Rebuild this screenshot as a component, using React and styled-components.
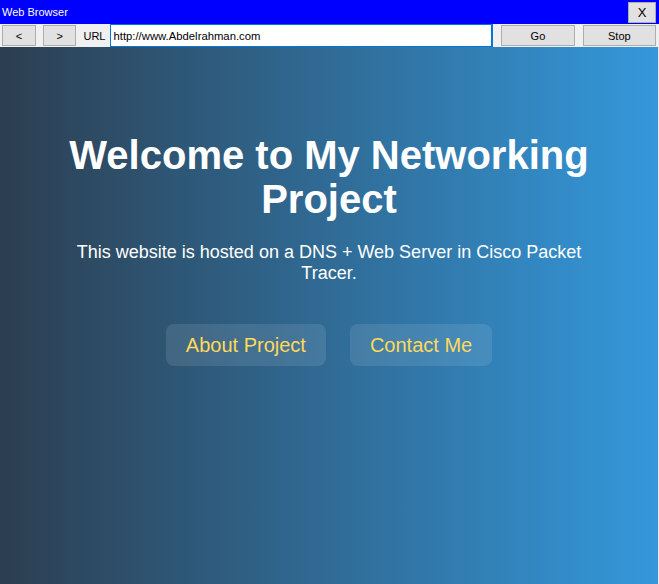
import { styled, createGlobalStyle } from "styled-components";

const GlobalStyle = createGlobalStyle`
  html, body {
    margin: 0;
    padding: 0;
  }
  body {
    font-family: "Liberation Sans", Arial, sans-serif;
    background: #f0f0f0;
  }
`;

function App() {
  return (
    <>
      <GlobalStyle />
      <Window>
        <TitleBar>
          <TitleText>Web Browser</TitleText>
          <CloseButton>X</CloseButton>
        </TitleBar>
        <Toolbar>
          <NavButton>&lt;</NavButton>
          <NavButton>&gt;</NavButton>
          <UrlLabel>URL</UrlLabel>
          <UrlInput defaultValue="http://www.Abdelrahman.com" />
          <ActionButton>Go</ActionButton>
          <ActionButton>Stop</ActionButton>
        </Toolbar>
        <Page>
          <Hero>
            <Heading>Welcome to My Networking Project</Heading>
            <Intro>
              This website is hosted on a DNS + Web Server in Cisco Packet
              Tracer.
            </Intro>
            <Links>
              <LinkButton>About Project</LinkButton>
              <LinkButton>Contact Me</LinkButton>
            </Links>
          </Hero>
        </Page>
      </Window>
    </>
  );
}

export default App;

const Window = styled.div`
  width: 659px;
  height: 584px;
  display: flex;
  flex-direction: column;
  overflow: hidden;
`;

const TitleBar = styled.div`
  height: 24px;
  background-color: #0000ff;
  display: flex;
  align-items: center;
  justify-content: space-between;
  padding: 0 3px 0 2px;
  box-sizing: border-box;
`;

const TitleText = styled.span`
  color: #ffffff;
  font-size: 11px;
`;

const CloseButton = styled.button`
  width: 28px;
  height: 21px;
  margin-top: 1px;
  padding: 0;
  background-color: #e1e1e1;
  border: 1px solid #adadad;
  font-family: "Liberation Sans", Arial, sans-serif;
  font-size: 13px;
  color: #000;
`;

const Toolbar = styled.div`
  height: 23px;
  display: flex;
  align-items: center;
  padding: 0 3px 0 2px;
  box-sizing: border-box;
  background-color: #f0f0f0;
`;

const NavButton = styled.button`
  width: 34px;
  height: 21px;
  margin-right: 7px;
  padding: 0;
  background-color: #e1e1e1;
  border: 1px solid #adadad;
  font-family: "Liberation Sans", Arial, sans-serif;
  font-size: 11px;
  color: #000;
`;

const UrlLabel = styled.span`
  font-size: 11px;
  color: #000;
  margin: 0 5px 0 0;
`;

const UrlInput = styled.input`
  width: 386px;
  height: 23px;
  box-sizing: border-box;
  border: 1px solid #0078d7;
  border-right-width: 2px;
  padding: 0 2px;
  font-family: "Liberation Sans", Arial, sans-serif;
  font-size: 11.3px;
  color: #000;
  outline: none;
  margin-right: 7px;
`;

const ActionButton = styled.button`
  width: 74px;
  height: 21px;
  margin-left: 1px;
  margin-right: 7px;
  padding: 0;
  background-color: #e1e1e1;
  border: 1px solid #adadad;
  font-family: "Liberation Sans", Arial, sans-serif;
  font-size: 11px;
  color: #000;
  &:last-child {
    margin-right: 0;
  }
`;

const Page = styled.div`
  flex: 1;
  background: linear-gradient(to right, #2c3e50, #3498db);
  border-right: 1px solid #e8e8e8;
  color: #ffffff;
`;

const Hero = styled.div`
  padding: 86px 50px 0;
  text-align: center;
`;

const Heading = styled.h1`
  margin: 0;
  font-size: 40px;
  line-height: 44px;
  font-weight: bold;
`;

const Intro = styled.p`
  margin: 21px 0 0;
  font-size: 18px;
  line-height: 21px;
`;

const Links = styled.div`
  margin-top: 40px;
  display: flex;
  justify-content: center;
  gap: 24px;
`;

const LinkButton = styled.a`
  display: inline-block;
  padding: 10px 20px;
  line-height: 22px;
  font-size: 20px;
  color: #ffd95a;
  background-color: rgba(255, 255, 255, 0.1);
  border-radius: 8px;
  text-decoration: none;
`;
